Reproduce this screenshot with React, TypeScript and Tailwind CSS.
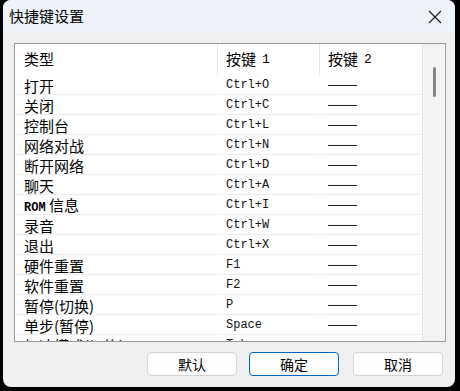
import React from "react";

const cjk = { fontFamily: '"Noto Sans CJK SC", "Noto Sans", sans-serif' };
const mono = { fontFamily: '"Liberation Mono", "DejaVu Sans Mono", monospace' };

const rows: [string, string][] = [
  ["打开", "Ctrl+O"],
  ["关闭", "Ctrl+C"],
  ["控制台", "Ctrl+L"],
  ["网络对战", "Ctrl+N"],
  ["断开网络", "Ctrl+D"],
  ["聊天", "Ctrl+A"],
  ["ROM 信息", "Ctrl+I"],
  ["录音", "Ctrl+W"],
  ["退出", "Ctrl+X"],
  ["硬件重置", "F1"],
  ["软件重置", "F2"],
  ["暂停(切换)", "P"],
  ["单步(暂停)", "Space"],
  ["加速模式(切换)", "Tab"],
];

function Label({ text }: { text: string }) {
  if (text.startsWith("ROM")) {
    return (
      <span>
        <span className="text-[12px] font-bold" style={mono}>ROM</span> 信息
      </span>
    );
  }
  return <span>{text}</span>;
}

function Row({ name, key1 }: { name: string; key1: string }) {
  return (
    <div className="flex h-[20px] shrink-0">
      <div className="w-[203px] px-[1px]">
        <div className="flex h-full items-center border-b border-[#ededed] pl-[8px] pt-[1px] text-[15px] leading-none text-black" style={cjk}>
          <Label text={name} />
        </div>
      </div>
      <div className="w-[102px] px-[1px]">
        <div className="flex h-full items-center border-b border-[#ededed] pl-[7px] pt-[1px] text-[12px] leading-none text-[#111]" style={mono}>
          {key1}
        </div>
      </div>
      <div className="w-[101px] px-[1px]">
        <div className="flex h-full items-center border-b border-[#ededed] pl-[7px] pt-[1px]">
          <div className="h-[1px] w-[29px] bg-[#222]" />
        </div>
      </div>
    </div>
  );
}

export default function App() {
  return (
    <div className="h-[391px] w-[460px] bg-black pl-[3px]">
      <div className="flex h-[387px] w-[452px] flex-col overflow-hidden rounded-[8px] bg-[#f0f0f0]">
        <div className="flex h-[33px] shrink-0 items-center justify-between bg-[#eef3fa] pl-[6px] pr-[13px]">
          <span className="text-[15px] text-black" style={cjk}>快捷键设置</span>
          <svg width="14" height="14" viewBox="0 0 14 14" className="mt-[1px]">
            <path d="M1 1 L13 13 M13 1 L1 13" stroke="#1a1a1a" strokeWidth="1.1" fill="none" />
          </svg>
        </div>

        <div className="ml-[11px] mt-[10px] flex h-[299px] w-[432px] border border-[#9b9b9b] bg-white">
          <div className="flex flex-1 flex-col overflow-hidden">
            <div className="flex h-[31px] shrink-0 text-[15px] text-black" style={cjk}>
              <div className="flex w-[203px] items-center border-r border-[#e5e5e5] pl-[9px]">类型</div>
              <div className="flex w-[102px] items-center border-r border-[#e5e5e5] pl-[8px]">
                按键<span className="ml-[6px] text-[13px]" style={mono}>1</span>
              </div>
              <div className="flex w-[101px] items-center pl-[8px]">
                按键<span className="ml-[6px] text-[13px]" style={mono}>2</span>
              </div>
            </div>
            {rows.map(([n, k]) => (
              <Row key={n} name={n} key1={k} />
            ))}
          </div>
          <div className="flex w-[23px] shrink-0 justify-center border-l border-[#e6e6e6] bg-[#f3f3f3] pt-[23px]">
            <div className="h-[30px] w-[3px] rounded-full bg-[#858585]" />
          </div>
        </div>

        <div className="mt-[10px] flex justify-end pr-[12px] text-[14px] text-black" style={cjk}>
          <button className="h-[24px] w-[90px] rounded-[4px] border border-[#d3d3d3] bg-[#fdfdfd]">默认</button>
          <button className="ml-[12px] h-[24px] w-[90px] rounded-[4px] border border-[#0067c0] bg-[#fdfdfd]">确定</button>
          <button className="ml-[14px] h-[24px] w-[90px] rounded-[4px] border border-[#d3d3d3] bg-[#fdfdfd]">取消</button>
        </div>
      </div>
    </div>
  );
}
